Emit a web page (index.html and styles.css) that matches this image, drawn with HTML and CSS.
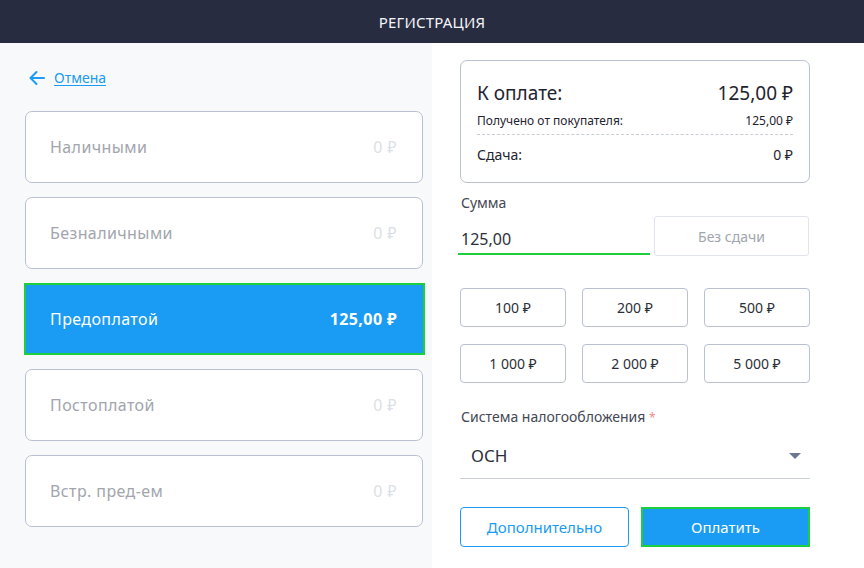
FILE: index.html
```html
<!DOCTYPE html>
<html lang="ru">
<head>
<meta charset="utf-8">
<title>Регистрация</title>
<link rel="stylesheet" href="styles.css">
</head>
<body>
<header class="topbar">РЕГИСТРАЦИЯ</header>
<main class="layout">
  <section class="left">
    <a class="back" href="#">
      <svg class="back-icon" width="18" height="16" viewBox="0 0 18 16"><path d="M16 8H2.5M8.5 2L2.5 8l6 6" fill="none" stroke="#1a9bf4" stroke-width="2" stroke-linecap="round" stroke-linejoin="round"/></svg>
      <span class="back-text">Отмена</span>
    </a>
    <div class="methods">
      <div class="method"><span>Наличными</span><span class="amt">0 ₽</span></div>
      <div class="method"><span>Безналичными</span><span class="amt">0 ₽</span></div>
      <div class="method active"><span>Предоплатой</span><span class="amt">125,00 ₽</span></div>
      <div class="method"><span>Постоплатой</span><span class="amt">0 ₽</span></div>
      <div class="method"><span>Встр. пред-ем</span><span class="amt">0 ₽</span></div>
    </div>
  </section>
  <section class="right">
    <div class="summary">
      <div class="sum-row big"><span>К оплате:</span><span>125,00 ₽</span></div>
      <div class="sum-row small"><span>Получено от покупателя:</span><span>125,00 ₽</span></div>
      <div class="sum-row mid"><span>Сдача:</span><span>0 ₽</span></div>
    </div>
    <div class="label">Сумма</div>
    <div class="input-row">
      <div class="input">125,00</div>
      <button class="nochange">Без сдачи</button>
    </div>
    <div class="quick">
      <button class="qbtn">100 ₽</button>
      <button class="qbtn">200 ₽</button>
      <button class="qbtn">500 ₽</button>
      <button class="qbtn">1 000 ₽</button>
      <button class="qbtn">2 000 ₽</button>
      <button class="qbtn">5 000 ₽</button>
    </div>
    <div class="label tax">Система налогообложения <span class="req">*</span></div>
    <div class="select"><span>ОСН</span><span class="caret"></span></div>
    <div class="actions">
      <button class="btn outline">Дополнительно</button>
      <button class="btn primary">Оплатить</button>
    </div>
  </section>
</main>
</body>
</html>
```
FILE: styles.css
```css
* { box-sizing: border-box; }
html, body { margin: 0; padding: 0; }
body {
  width: 864px;
  height: 568px;
  overflow: hidden;
  font-family: "Noto Sans", "Open Sans", sans-serif;
  background: #fff;
  color: #2b2f3a;
}
.topbar {
  height: 43px;
  background: #272c41;
  color: #f4f5f8;
  font-size: 15px;
  display: flex;
  align-items: center;
  justify-content: center;
  letter-spacing: 0.2px;
}
.layout {
  display: flex;
  height: 525px;
}
.left {
  width: 432px;
  background: #f8f9fb;
  padding: 25px 0 0 25px;
}
.back {
  display: flex;
  width: fit-content;
  align-items: center;
  gap: 8px;
  height: 20px;
  margin-left: 3px;
  color: #1a9bf4;
  text-decoration: none;
  font-size: 14px;
  line-height: 20px;
}
.back-text { text-decoration: underline; text-underline-offset: 2px; }
.methods {
  display: flex;
  flex-direction: column;
  gap: 14px;
  margin-top: 23px;
  width: 398px;
}
.method {
  height: 72px;
  border: 1px solid #b9c0d0;
  border-radius: 7px;
  background: #fff;
  display: flex;
  align-items: center;
  justify-content: space-between;
  padding: 0 25px 0 24px;
  font-size: 16px;
  color: #a2a5ad;
  letter-spacing: 0.4px;
}
.method .amt { color: #dcdfe7; }
.method.active {
  background: #1a9bf4;
  border: 2px solid #1dcf3f;
  border-radius: 0;
  margin: 0 -2px 0 -1px;
  padding: 0 26px 0 24px;
  color: #fff;
}
.method.active .amt { color: #fff; font-weight: 700; }
.right {
  width: 432px;
  padding: 17px 54px 0 28px;
}
.summary {
  border: 1px solid #b9c0d0;
  border-radius: 7px;
  padding: 19px 16px 17px 16px;
}
.sum-row {
  display: flex;
  justify-content: space-between;
  color: #1f2330;
}
.sum-row.big { font-size: 19px; line-height: 26px; }
.sum-row.small {
  font-size: 12px;
  line-height: 16px;
  margin-top: 7px;
  padding-bottom: 5px;
  border-bottom: 1px dashed #c7ccd8;
}
.sum-row.mid { font-size: 14px; line-height: 20px; margin-top: 10px; }
.label {
  font-size: 14px;
  line-height: 18px;
  color: #444854;
  margin-top: 11px;
  padding-left: 1px;
}
.input-row {
  display: flex;
  gap: 4px;
  margin-top: 4px;
  margin-left: -2px;
}
.input {
  width: 192px;
  height: 39px;
  padding: 13px 0 4px 3px;
  line-height: 20px;
  font-size: 16px;
  color: #2b2f3a;
  border-bottom: 2px solid #1dcf3f;
}
.nochange {
  width: 155px;
  height: 40px;
  border: 1px solid #e1e4ec;
  border-radius: 3px;
  background: #fff;
  color: #a2a5ad;
  font-family: inherit;
  font-size: 14px;
}
.quick {
  display: grid;
  grid-template-columns: repeat(3, 106px);
  column-gap: 16px;
  row-gap: 17px;
  margin-top: 32px;
}
.qbtn {
  height: 39px;
  border: 1px solid #b9c0d0;
  border-radius: 4px;
  background: #fff;
  font-family: inherit;
  font-size: 14px;
  color: #2b2f3a;
}
.label.tax { margin-top: 25px; }
.req { color: #f08a8a; font-size: 12px; }
.select {
  display: flex;
  align-items: center;
  justify-content: space-between;
  padding: 17px 9px 10px 11px;
  line-height: 24px;
  font-size: 17px;
  color: #2b2f3a;
  border-bottom: 1px solid #c9cedb;
}
.caret {
  width: 0;
  height: 0;
  border-left: 6px solid transparent;
  border-right: 6px solid transparent;
  border-top: 6px solid #6c7690;
}
.actions {
  display: flex;
  gap: 12px;
  margin-top: 28px;
}
.btn {
  width: 169px;
  height: 40px;
  border-radius: 4px;
  font-family: inherit;
  font-size: 15px;
}
.btn.outline {
  border: 1px solid #1a9bf4;
  background: #fff;
  color: #1a9bf4;
}
.btn.primary {
  border: 2px solid #1dcf3f;
  border-radius: 0;
  background: #1a9bf4;
  color: #fff;
}
```
